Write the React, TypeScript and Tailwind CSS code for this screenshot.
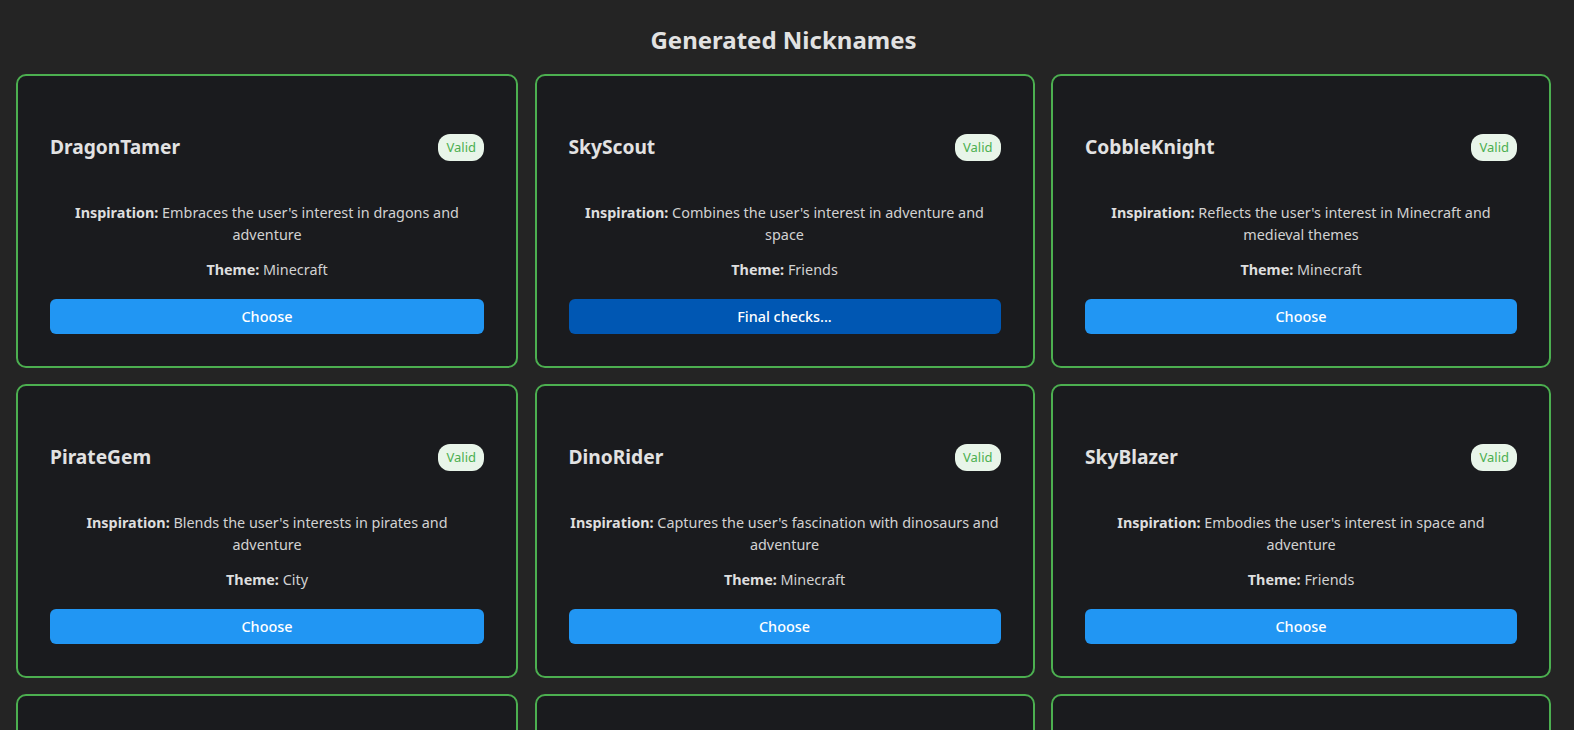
import React from "react";

type Nick = { name: string; inspiration: string; theme: string; pending?: boolean };

const nicks: Nick[] = [
  { name: "DragonTamer", inspiration: "Embraces the user's interest in dragons and adventure", theme: "Minecraft" },
  { name: "SkyScout", inspiration: "Combines the user's interest in adventure and space", theme: "Friends", pending: true },
  { name: "CobbleKnight", inspiration: "Reflects the user's interest in Minecraft and medieval themes", theme: "Minecraft" },
  { name: "PirateGem", inspiration: "Blends the user's interests in pirates and adventure", theme: "City" },
  { name: "DinoRider", inspiration: "Captures the user's fascination with dinosaurs and adventure", theme: "Minecraft" },
  { name: "SkyBlazer", inspiration: "Embodies the user's interest in space and adventure", theme: "Friends" },
  { name: "StarPilot", inspiration: "Combines the user's love of space and flying", theme: "Friends" },
  { name: "RedstoneWiz", inspiration: "Reflects the user's interest in Minecraft and inventing", theme: "Minecraft" },
  { name: "CityRanger", inspiration: "Blends the user's interests in cities and exploring", theme: "City" },
];

function Card({ n }: { n: Nick }) {
  return (
    <div className="rounded-[10px] border-2 border-[#4caf50] bg-[#1a1b1e] p-8 flex flex-col">
      <div className="mt-[25px] flex items-center justify-between h-[28px]">
        <h3 className="text-[19.2px] leading-[28px] font-bold text-[#e2e2e2]">{n.name}</h3>
        <span className="rounded-xl bg-[#e8f5e9] px-2 py-1 text-[13px] leading-[19px] text-[#4caf50]">Valid</span>
      </div>
      <p className="mt-[41px] text-center text-[14.4px] leading-[22px] text-[#d2d2d2]">
        <span className="font-bold text-[#dedede]">Inspiration:</span> {n.inspiration}
      </p>
      <p className="mt-[13px] text-center text-[14.4px] leading-[22px] text-[#d2d2d2]">
        <span className="font-bold text-[#dedede]">Theme:</span> {n.theme}
      </p>
      <button
        className={
          "mt-[18px] h-[35px] w-full rounded-md text-[14.4px] font-medium text-white " +
          (n.pending ? "bg-[#0057b3]" : "bg-[#2196f3]")
        }
      >
        {n.pending ? "Final checks..." : "Choose"}
      </button>
    </div>
  );
}

export default function App() {
  return (
    <div
      className="h-screen overflow-hidden bg-[#242424] pl-4 pr-[23px] pt-[24px]"
      style={{ fontFamily: '"Noto Sans", "Open Sans", sans-serif' }}
    >
      <h2 className="text-center text-[24px] leading-[32px] font-bold text-[#e2e2e2]">Generated Nicknames</h2>
      <div className="mt-[18px] grid grid-cols-[502px_500px_500px] gap-x-[16.5px] gap-y-[16px]">
        {nicks.map((n) => (
          <Card key={n.name} n={n} />
        ))}
      </div>
    </div>
  );
}
